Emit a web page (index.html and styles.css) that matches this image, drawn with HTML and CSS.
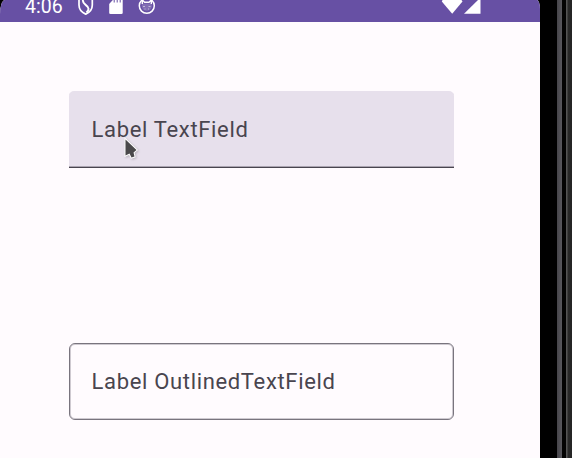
FILE: index.html
```html
<!DOCTYPE html>
<html lang="en">
<head>
<meta charset="utf-8">
<title>Text fields</title>
<link rel="stylesheet" href="styles.css">
</head>
<body>
<div class="device">
  <main class="screen">
    <header class="status">
      <span class="clock">4:06</span>
      <svg class="icons" width="82" height="22" viewBox="0 0 82 22" fill="none" stroke="#fff" stroke-width="1.7">
        <path d="M2 -3V5C2 9 5 12.5 8.7 14.1C12.5 12.5 15.3 9 15.3 5V-3"/>
        <path d="M6 0C5 5 12 5 11.5 9C11.5 10.5 10.5 11.5 9.5 12.5" stroke-width="2"/>
        <path d="M32.5 4L37-1H46V12.7Q46 14 44.7 14H33.8Q32.5 14 32.5 12.7Z" transform="translate(-.3 0)" fill="#fff" stroke="none"/>
        <path d="M37.5 0V2.5M40.5 0V2.5M43.5 0V2.5" transform="translate(-.3 0)" stroke="#6750a4" stroke-width="1"/>
        <circle cx="69.8" cy="5.8" r="7.5" stroke-width="1.5"/>
        <path d="M64.8 2L66 3.5H73.6L74.8 2V7C74 9.8 72 10.8 69.8 10.8S65.6 9.8 64.8 7Z" fill="#fff" fill-opacity=".18" stroke="none"/>
        <path d="M65.3 4V0L67.6 2.2H72L74.3 0V4" stroke-width="1.4"/>
        <path d="M66 6.5H68M71.5 6.5H73.5M67.5 9H68.5M71 9H72" stroke-width="1" stroke-opacity=".5"/>
      </svg>
      <svg class="signal" width="41" height="22" viewBox="0 0 41 22" fill="#fff">
        <path d="M1.5 0H20.5L21.5 1.5L11.2 13.8L.8 1.5Z"/>
        <path d="M39.5 0V13.8H23L37 0Z"/>
      </svg>
    </header>
    <div class="form">
      <div class="field filled">Label TextField</div>
      <div class="field outlined">Label OutlinedTextField</div>
    </div>
  </main>
  <div class="bezel"></div>
</div>
<svg class="cursor" width="20" height="26" viewBox="0 0 20 26">
  <path d="M4.5 2.5V18.5L8.5 16.5L10.5 20.5L13.5 19.5L12.5 15.5L15.5 13Z" fill="#4a494b" stroke="#fff" stroke-width="2" paint-order="stroke"/>
</svg>
</body>
</html>
```
FILE: styles.css
```css
* { box-sizing: border-box; }
body {
  margin: 0;
  overflow: hidden;
  background: #000;
  font-family: Roboto, sans-serif;
}
.device { display: flex; height: 458px; }
.screen {
  width: 540px;
  background: #fffbfe;
  border-radius: 5px 3px 0 0 / 14px 9px 0 0;
  overflow: hidden;
}
.status {
  display: flex;
  height: 22px;
  padding: 0 58px 0 25px;
  background: #6750a4;
  color: #fff;
}
.clock {
  width: 52px;
  font-size: 19.5px;
  line-height: 13px;
}
.signal { margin-left: auto; }
.form {
  display: flex;
  flex-direction: column;
  gap: 175px;
  width: 385px;
  margin: 69px 0 0 69px;
}
.field {
  height: 77px;
  padding-left: 22.6px;
  color: #49454f;
  font-size: 22px;
  line-height: 78px;
  letter-spacing: .66px;
}
.filled {
  background: #e7e0ec;
  border-bottom: 1px solid #49454f;
  border-radius: 5px 5px 0 0;
  box-shadow: inset 0 -1px #aaa4b0;
}
.outlined {
  border: 1px solid #79747e;
  border-radius: 6px;
  box-shadow: inset 0 0 0 1px #cfcad1;
  padding-left: 21.6px;
  line-height: 76px;
}
.bezel {
  width: 32px;
  background: linear-gradient(90deg, #000 17px, #46454a 17px, #59585e 22px, #030303 22px, #030303 26px, #555 26px, #555 27px, #292929 28px, #242424 32px);
}
.cursor {
  position: absolute;
  left: 120.5px;
  top: 137px;
  filter: drop-shadow(1px 1px 1px #0003);
}
```
